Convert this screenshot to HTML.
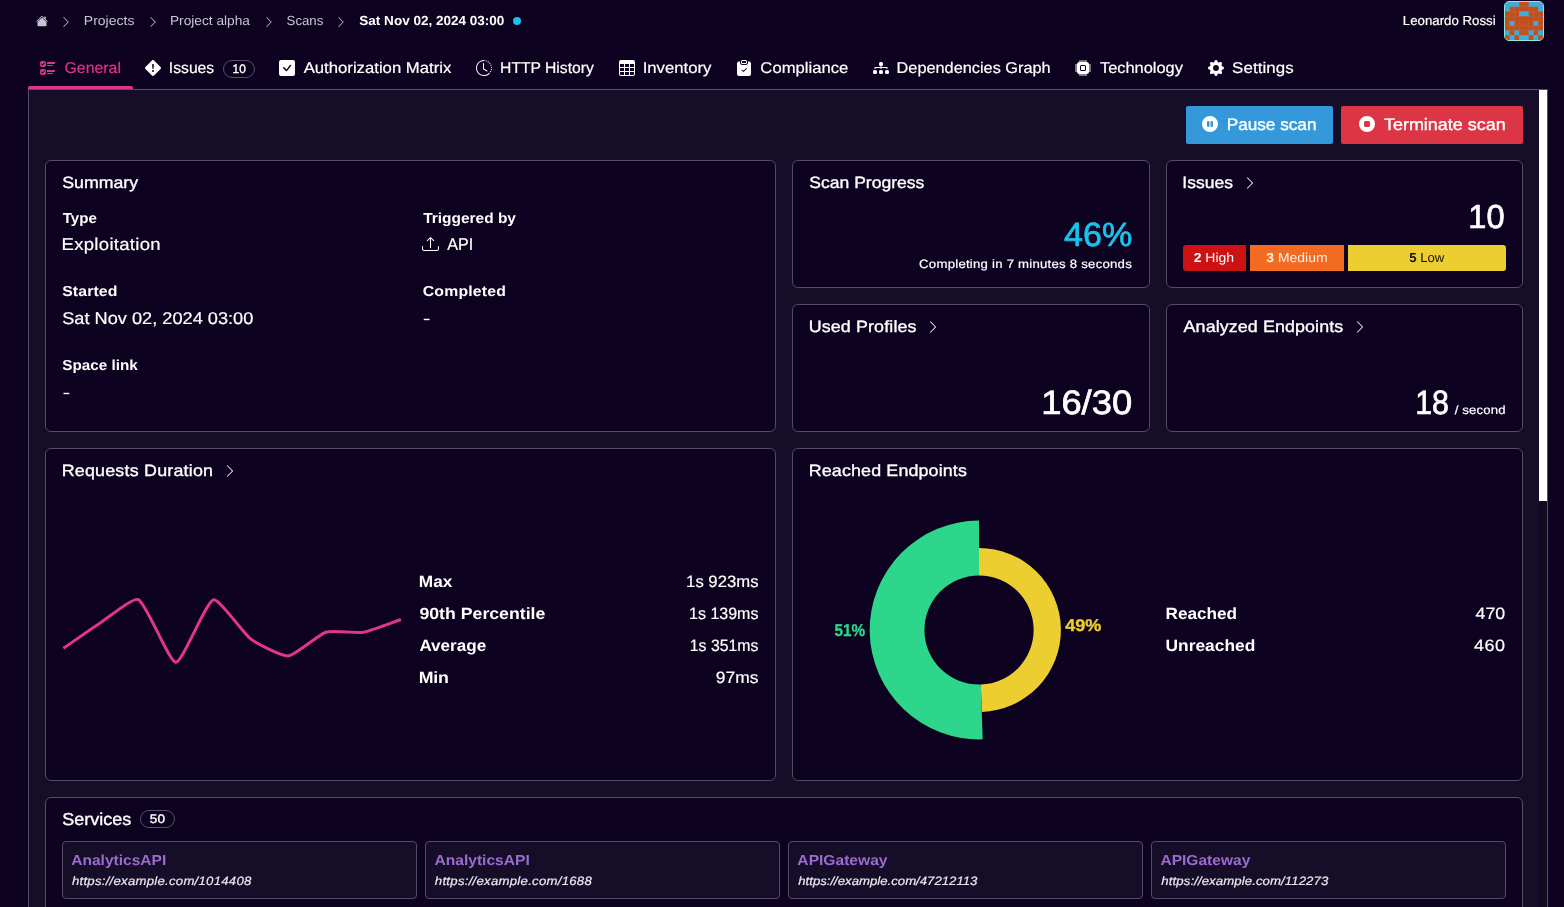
<!DOCTYPE html>
<html lang="en">
<head>
<meta charset="utf-8">
<title>Scan Sat Nov 02, 2024 03:00 - General</title>
<style>
html,body{margin:0;padding:0}
body{width:1564px;height:907px;overflow:hidden;background:#0d0220;color:#fff;font-family:"Liberation Sans",sans-serif}
#app{position:absolute;left:0;top:0;width:1564px;height:907px;overflow:hidden;will-change:transform}
#app *{box-sizing:border-box}
.g{position:absolute}
.t{position:absolute;margin:0;padding:0;white-space:nowrap;line-height:1;text-rendering:geometricPrecision;text-decoration:none}
.ic{position:absolute;display:block;overflow:visible}
.panel{background:#160e28;border:1px solid #565063}
.card{background:#0d0220;border:1px solid #544c64;border-radius:6px}
.svc{background:#160e28;border:1px solid #544c64;border-radius:4px}
.pill{border:1px solid #585068;border-radius:10px}
.btn{border-radius:2px}
</style>
</head>
<body>
<div id="app">
 <header class="g top" style="left:0px;top:0px;width:1564px;height:44px;">
  <nav class="g crumbs" aria-label="breadcrumb" style="left:28px;top:8px;width:520px;height:28px;">
   <svg class="ic" style="left:8px;top:7.3px" width="12" height="12" viewBox="0 0 16 16" fill="#c9c4d1" aria-hidden="true"><path d="M8.707 1.5a1 1 0 0 0-1.414 0L.646 8.146a.5.5 0 0 0 .708.708L8 2.207l6.646 6.647a.5.5 0 0 0 .708-.708L13 5.793V2.5a.5.5 0 0 0-.5-.5h-1a.5.5 0 0 0-.5.5v1.293z"/><path d="m8 3.293 6 6V13.5a1.5 1.5 0 0 1-1.5 1.5h-9A1.5 1.5 0 0 1 2 13.5V9.293z"/></svg>
   <svg class="ic" style="left:31.85px;top:8px" width="12" height="12" viewBox="0 0 16 16" fill="#c9c4d1" aria-hidden="true"><path fill-rule="evenodd" d="M4.646 1.646a.5.5 0 0 1 .708 0l6 6a.5.5 0 0 1 0 .708l-6 6a.5.5 0 0 1-.708-.708L10.293 8 4.646 2.354a.5.5 0 0 1 0-.708"/></svg>
   <svg class="ic" style="left:118.6px;top:8px" width="12" height="12" viewBox="0 0 16 16" fill="#c9c4d1" aria-hidden="true"><path fill-rule="evenodd" d="M4.646 1.646a.5.5 0 0 1 .708 0l6 6a.5.5 0 0 1 0 .708l-6 6a.5.5 0 0 1-.708-.708L10.293 8 4.646 2.354a.5.5 0 0 1 0-.708"/></svg>
   <svg class="ic" style="left:234.75px;top:8px" width="12" height="12" viewBox="0 0 16 16" fill="#c9c4d1" aria-hidden="true"><path fill-rule="evenodd" d="M4.646 1.646a.5.5 0 0 1 .708 0l6 6a.5.5 0 0 1 0 .708l-6 6a.5.5 0 0 1-.708-.708L10.293 8 4.646 2.354a.5.5 0 0 1 0-.708"/></svg>
   <svg class="ic" style="left:307.15px;top:8px" width="12" height="12" viewBox="0 0 16 16" fill="#c9c4d1" aria-hidden="true"><path fill-rule="evenodd" d="M4.646 1.646a.5.5 0 0 1 .708 0l6 6a.5.5 0 0 1 0 .708l-6 6a.5.5 0 0 1-.708-.708L10.293 8 4.646 2.354a.5.5 0 0 1 0-.708"/></svg>
   <i class="g" style="left:484.9px;top:8.8px;width:8.4px;height:8.4px;border-radius:50%;background:#16c1ea"></i>
   <span class="t" style="left:55px;top:6px;color:#c9c4d1;font-size:13.2px;font-weight:400;letter-spacing:0.000px;transform:translateX(0.82px) scaleX(1.0614);transform-origin:0 0;">Projects</span>
   <span class="t" style="left:141px;top:6px;color:#c9c4d1;font-size:13.2px;font-weight:400;letter-spacing:0.000px;transform:translateX(0.92px) scaleX(1.0397);transform-origin:0 0;">Project alpha</span>
   <span class="t" style="left:258px;top:6px;color:#c9c4d1;font-size:13.2px;font-weight:400;letter-spacing:0.000px;transform:translateX(0.60px) scaleX(1.0014);transform-origin:0 0;">Scans</span>
   <span class="t" style="left:331px;top:6px;color:#ffffff;font-size:13.2px;font-weight:700;letter-spacing:0.000px;transform:translateX(0.32px) scaleX(1.0251);transform-origin:0 0;">Sat Nov 02, 2024 03:00</span>
  </nav>
  <div class="g user" style="left:1390px;top:0px;width:160px;height:44px;">
   <span class="t" style="left:12px;top:14px;color:#ffffff;font-size:13.1px;font-weight:400;letter-spacing:0.000px;-webkit-text-stroke:0.2px currentColor;transform:translateX(0.78px) scaleX(1.0121);transform-origin:0 0;">Leonardo Rossi</span>
   <div class="g avatar" style="left:114px;top:1px;width:40px;height:40px;border:1px solid #8fe8d8;border-radius:5px;overflow:hidden;background:#9a8a86;">
    <svg width="38" height="38" viewBox="0 0 38 38" style="display:block" role="img" aria-label="Leonardo Rossi avatar"><rect x="0.000" y="0.000" width="4.750" height="4.750" fill="#3baee0"/><rect x="4.750" y="0.000" width="4.750" height="4.750" fill="#3baee0"/><rect x="9.500" y="0.000" width="4.750" height="4.750" fill="#3baee0"/><rect x="14.250" y="0.000" width="4.750" height="4.750" fill="#c2501f"/><rect x="19.000" y="0.000" width="4.750" height="4.750" fill="#c2501f"/><rect x="23.750" y="0.000" width="4.750" height="4.750" fill="#3baee0"/><rect x="28.500" y="0.000" width="4.750" height="4.750" fill="#3baee0"/><rect x="33.250" y="0.000" width="4.750" height="4.750" fill="#3baee0"/><rect x="0.000" y="4.750" width="4.750" height="4.750" fill="#3baee0"/><rect x="4.750" y="4.750" width="4.750" height="4.750" fill="#c2501f"/><rect x="9.500" y="4.750" width="4.750" height="4.750" fill="#c2501f"/><rect x="14.250" y="4.750" width="4.750" height="4.750" fill="#c2501f"/><rect x="19.000" y="4.750" width="4.750" height="4.750" fill="#c2501f"/><rect x="23.750" y="4.750" width="4.750" height="4.750" fill="#c2501f"/><rect x="28.500" y="4.750" width="4.750" height="4.750" fill="#c2501f"/><rect x="33.250" y="4.750" width="4.750" height="4.750" fill="#3baee0"/><rect x="0.000" y="9.500" width="4.750" height="4.750" fill="#c2501f"/><rect x="4.750" y="9.500" width="4.750" height="4.750" fill="#c2501f"/><rect x="9.500" y="9.500" width="4.750" height="4.750" fill="#c2501f"/><rect x="14.250" y="9.500" width="4.750" height="4.750" fill="#3baee0"/><rect x="19.000" y="9.500" width="4.750" height="4.750" fill="#3baee0"/><rect x="23.750" y="9.500" width="4.750" height="4.750" fill="#c2501f"/><rect x="28.500" y="9.500" width="4.750" height="4.750" fill="#c2501f"/><rect x="33.250" y="9.500" width="4.750" height="4.750" fill="#c2501f"/><rect x="0.000" y="14.250" width="4.750" height="4.750" fill="#c2501f"/><rect x="4.750" y="14.250" width="4.750" height="4.750" fill="#c2501f"/><rect x="9.500" y="14.250" width="4.750" height="4.750" fill="#c2501f"/><rect x="14.250" y="14.250" width="4.750" height="4.750" fill="#c2501f"/><rect x="19.000" y="14.250" width="4.750" height="4.750" fill="#c2501f"/><rect x="23.750" y="14.250" width="4.750" height="4.750" fill="#c2501f"/><rect x="28.500" y="14.250" width="4.750" height="4.750" fill="#c2501f"/><rect x="33.250" y="14.250" width="4.750" height="4.750" fill="#c2501f"/><rect x="0.000" y="19.000" width="4.750" height="4.750" fill="#c2501f"/><rect x="4.750" y="19.000" width="4.750" height="4.750" fill="#3baee0"/><rect x="9.500" y="19.000" width="4.750" height="4.750" fill="#c2501f"/><rect x="14.250" y="19.000" width="4.750" height="4.750" fill="#c2501f"/><rect x="19.000" y="19.000" width="4.750" height="4.750" fill="#c2501f"/><rect x="23.750" y="19.000" width="4.750" height="4.750" fill="#c2501f"/><rect x="28.500" y="19.000" width="4.750" height="4.750" fill="#3baee0"/><rect x="33.250" y="19.000" width="4.750" height="4.750" fill="#c2501f"/><rect x="0.000" y="23.750" width="4.750" height="4.750" fill="#c2501f"/><rect x="4.750" y="23.750" width="4.750" height="4.750" fill="#c2501f"/><rect x="9.500" y="23.750" width="4.750" height="4.750" fill="#c2501f"/><rect x="14.250" y="23.750" width="4.750" height="4.750" fill="#c2501f"/><rect x="19.000" y="23.750" width="4.750" height="4.750" fill="#c2501f"/><rect x="23.750" y="23.750" width="4.750" height="4.750" fill="#c2501f"/><rect x="28.500" y="23.750" width="4.750" height="4.750" fill="#c2501f"/><rect x="33.250" y="23.750" width="4.750" height="4.750" fill="#c2501f"/><rect x="0.000" y="28.500" width="4.750" height="4.750" fill="#3baee0"/><rect x="4.750" y="28.500" width="4.750" height="4.750" fill="#c2501f"/><rect x="9.500" y="28.500" width="4.750" height="4.750" fill="#3baee0"/><rect x="14.250" y="28.500" width="4.750" height="4.750" fill="#c2501f"/><rect x="19.000" y="28.500" width="4.750" height="4.750" fill="#c2501f"/><rect x="23.750" y="28.500" width="4.750" height="4.750" fill="#3baee0"/><rect x="28.500" y="28.500" width="4.750" height="4.750" fill="#c2501f"/><rect x="33.250" y="28.500" width="4.750" height="4.750" fill="#3baee0"/><rect x="0.000" y="33.250" width="4.750" height="4.750" fill="#c2501f"/><rect x="4.750" y="33.250" width="4.750" height="4.750" fill="#3baee0"/><rect x="9.500" y="33.250" width="4.750" height="4.750" fill="#c2501f"/><rect x="14.250" y="33.250" width="4.750" height="4.750" fill="#3baee0"/><rect x="19.000" y="33.250" width="4.750" height="4.750" fill="#3baee0"/><rect x="23.750" y="33.250" width="4.750" height="4.750" fill="#c2501f"/><rect x="28.500" y="33.250" width="4.750" height="4.750" fill="#3baee0"/><rect x="33.250" y="33.250" width="4.750" height="4.750" fill="#c2501f"/></svg>
   </div>
  </div>
 </header>
 <nav class="g tabs" aria-label="Scan sections" style="left:28px;top:48px;width:1400px;height:41px;">
  <a class="g tab active" style="left:0px;top:4px;width:105px;height:37px;">
   <i class="g" style="left:0;top:34px;width:105px;height:3px;background:#dc348a;border-radius:2px 2px 0 0"></i>
   <svg class="ic" style="left:12px;top:8.2px" width="16" height="16" viewBox="0 0 16 16" fill="#dc348a" aria-hidden="true"><path d="M7 2.5a.5.5 0 0 1 .5-.5h7a.5.5 0 0 1 .5.5v1a.5.5 0 0 1-.5.5h-7a.5.5 0 0 1-.5-.5zM2 1a2 2 0 0 0-2 2v2a2 2 0 0 0 2 2h2a2 2 0 0 0 2-2V3a2 2 0 0 0-2-2zm0 8a2 2 0 0 0-2 2v2a2 2 0 0 0 2 2h2a2 2 0 0 0 2-2v-2a2 2 0 0 0-2-2zm.854-3.646a.5.5 0 0 1-.708 0l-1-1a.5.5 0 1 1 .708-.708l.646.647 1.646-1.647a.5.5 0 1 1 .708.708zm0 8a.5.5 0 0 1-.708 0l-1-1a.5.5 0 0 1 .708-.708l.646.647 1.646-1.647a.5.5 0 0 1 .708.708zM7 10.5a.5.5 0 0 1 .5-.5h7a.5.5 0 0 1 .5.5v1a.5.5 0 0 1-.5.5h-7a.5.5 0 0 1-.5-.5zm0-5a.5.5 0 0 1 .5-.5h5a.5.5 0 0 1 0 1h-5a.5.5 0 0 1-.5-.5m0 8a.5.5 0 0 1 .5-.5h5a.5.5 0 0 1 0 1h-5a.5.5 0 0 1-.5-.5"/></svg>
   <span class="t" style="left:36px;top:9px;color:#dc348a;font-size:15.5px;font-weight:400;letter-spacing:0.000px;-webkit-text-stroke:0.2px currentColor;transform:translateX(0.48px) scaleX(1.0242);transform-origin:0 0;">General</span>
  </a>
  <a class="g tab" style="left:109px;top:4px;width:126px;height:37px;">
   <svg class="ic" style="left:8.1px;top:8px" width="16" height="16" viewBox="0 0 16 16" fill="#fff" aria-hidden="true"><path d="M9.05.435c-.58-.58-1.52-.58-2.1 0L.436 6.95c-.58.58-.58 1.519 0 2.098l6.516 6.516c.58.58 1.519.58 2.098 0l6.516-6.516c.58-.58.58-1.519 0-2.098zM8 4c.535 0 .954.462.9.995l-.35 3.507a.552.552 0 0 1-1.1 0L7.1 4.995A.905.905 0 0 1 8 4m.002 6a1 1 0 1 1 0 2 1 1 0 0 1 0-2"/></svg>
   <span class="t" style="left:31px;top:9px;color:#ffffff;font-size:15.5px;font-weight:400;letter-spacing:0.000px;-webkit-text-stroke:0.2px currentColor;transform:translateX(0.81px) scaleX(1.0134);transform-origin:0 0;">Issues</span>
   <span class="g pill" style="left:86px;top:8px;width:32px;height:18px;">
    <span class="t" style="left:8px;top:2px;color:#ffffff;font-size:12.4px;font-weight:400;letter-spacing:0.000px;-webkit-text-stroke:0.35px currentColor;transform:translateX(0.54px) scaleX(0.9569);transform-origin:0 0;">10</span>
   </span>
  </a>
  <a class="g tab" style="left:243px;top:4px;width:189px;height:37px;">
   <svg class="ic" style="left:7.9px;top:8px" width="16" height="16" viewBox="0 0 16 16" fill="#fff" aria-hidden="true"><path d="M2 0a2 2 0 0 0-2 2v12a2 2 0 0 0 2 2h12a2 2 0 0 0 2-2V2a2 2 0 0 0-2-2zm10.03 4.97a.75.75 0 0 1 .011 1.05l-3.992 4.99a.75.75 0 0 1-1.08.02L4.324 8.384a.75.75 0 1 1 1.06-1.06l2.094 2.093 3.473-4.425a.75.75 0 0 1 1.08-.022z"/></svg>
   <span class="t" style="left:32px;top:9px;color:#ffffff;font-size:15.5px;font-weight:400;letter-spacing:0.000px;-webkit-text-stroke:0.2px currentColor;transform:translateX(0.63px) scaleX(1.0784);transform-origin:0 0;">Authorization Matrix</span>
  </a>
  <a class="g tab" style="left:440px;top:4px;width:135px;height:37px;">
   <svg class="ic" style="left:7.9px;top:8px" width="16" height="16" viewBox="0 0 16 16" fill="#fff" aria-hidden="true"><path d="M8.515 1.019A7 7 0 0 0 8 1V0a8 8 0 0 1 .589.022zm2.004.45a7 7 0 0 0-.985-.299l.219-.976q.576.129 1.126.342zm1.37.71a7 7 0 0 0-.439-.27l.493-.87a8 8 0 0 1 .979.654l-.615.789a7 7 0 0 0-.418-.302zm1.834 1.79a7 7 0 0 0-.653-.796l.724-.69q.406.429.747.91zm.744 1.352a7 7 0 0 0-.214-.468l.893-.45a8 8 0 0 1 .45 1.088l-.95.313a7 7 0 0 0-.179-.483m.53 2.507a7 7 0 0 0-.1-1.025l.985-.17q.1.58.116 1.17zm-.131 1.538q.05-.254.081-.51l.993.123a8 8 0 0 1-.23 1.155l-.964-.267q.069-.247.12-.501m-.952 2.379q.276-.436.486-.908l.914.405q-.24.54-.555 1.038zm-.964 1.205q.183-.183.35-.378l.758.653a8 8 0 0 1-.401.432z"/><path d="M8 1a7 7 0 1 0 4.95 11.95l.707.707A8.001 8.001 0 1 1 8 0z"/><path d="M7.5 3a.5.5 0 0 1 .5.5v5.21l3.248 1.856a.5.5 0 0 1-.496.868l-3.5-2A.5.5 0 0 1 7 9V3.500a.5.5 0 0 1 .5-.5"/></svg>
   <span class="t" style="left:32px;top:9px;color:#ffffff;font-size:15.5px;font-weight:400;letter-spacing:0.000px;-webkit-text-stroke:0.2px currentColor;transform:translateX(0.07px) scaleX(1.0107);transform-origin:0 0;">HTTP History</span>
  </a>
  <a class="g tab" style="left:583px;top:4px;width:109px;height:37px;">
   <svg class="ic" style="left:7.8px;top:8px" width="16" height="16" viewBox="0 0 16 16" fill="#fff" aria-hidden="true"><path d="M0 2a2 2 0 0 1 2-2h12a2 2 0 0 1 2 2v12a2 2 0 0 1-2 2H2a2 2 0 0 1-2-2zm15 2h-4v3h4zm0 4h-4v3h4zm0 4h-4v3h3a1 1 0 0 0 1-1zm-5 3v-3H6v3zm-5 0v-3H1v2a1 1 0 0 0 1 1zm-4-4h4V8H1zm0-4h4V4H1zm5-3v3h4V4zm4 4H6v3h4z"/></svg>
   <span class="t" style="left:31px;top:9px;color:#ffffff;font-size:15.5px;font-weight:400;letter-spacing:-0.000px;-webkit-text-stroke:0.2px currentColor;transform:translateX(0.63px) scaleX(1.0785);transform-origin:0 0;">Inventory</span>
  </a>
  <a class="g tab" style="left:700px;top:4px;width:129px;height:37px;">
   <svg class="ic" style="left:7.9px;top:7.8px" width="16" height="16" viewBox="0 0 16 16" fill="#fff" aria-hidden="true"><path d="M6.5 0A1.5 1.5 0 0 0 5 1.5v1A1.5 1.5 0 0 0 6.5 4h3A1.5 1.5 0 0 0 11 2.5v-1A1.5 1.5 0 0 0 9.5 0zm3 1a.5.5 0 0 1 .5.5v1a.5.5 0 0 1-.5.5h-3a.5.5 0 0 1-.5-.5v-1a.5.5 0 0 1 .5-.5z"/><path d="M4 1.5H3a2 2 0 0 0-2 2V14a2 2 0 0 0 2 2h10a2 2 0 0 0 2-2V3.500a2 2 0 0 0-2-2h-1v1A2.500 2.500 0 0 1 9.500 5h-3A2.500 2.500 0 0 1 4 2.500zm6.854 7.354-3 3a.5.5 0 0 1-.708 0l-1.500-1.500a.5.5 0 0 1 .708-.708L7.500 10.793l2.646-2.647a.5.5 0 0 1 .708.708"/></svg>
   <span class="t" style="left:32px;top:9px;color:#ffffff;font-size:15.5px;font-weight:400;letter-spacing:0.000px;-webkit-text-stroke:0.2px currentColor;transform:translateX(0.36px) scaleX(1.0736);transform-origin:0 0;">Compliance</span>
  </a>
  <a class="g tab" style="left:837px;top:4px;width:194px;height:37px;">
   <svg class="ic" style="left:7.5px;top:8px" width="16" height="16" viewBox="0 0 16 16" fill="#fff" aria-hidden="true"><path fill-rule="evenodd" d="M6 3.5A1.5 1.5 0 0 1 7.5 2h1A1.5 1.5 0 0 1 10 3.5v1A1.5 1.5 0 0 1 8.500 6v1H14a.5.5 0 0 1 .5.5v1a.5.5 0 0 1-1 0V8h-5v.5a.5.5 0 0 1-1 0V8h-5v.5a.5.5 0 0 1-1 0v-1A.5.5 0 0 1 2 7h5.500V6A1.500 1.500 0 0 1 6 4.500zm-6 8A1.500 1.500 0 0 1 1.500 10h1A1.500 1.500 0 0 1 4 11.500v1A1.500 1.500 0 0 1 2.500 14h-1A1.500 1.500 0 0 1 0 12.500zm6 0A1.500 1.500 0 0 1 7.500 10h1a1.500 1.500 0 0 1 1.500 1.500v1A1.500 1.500 0 0 1 8.500 14h-1A1.500 1.500 0 0 1 6 12.500zm6 0a1.500 1.500 0 0 1 1.500-1.500h1a1.500 1.500 0 0 1 1.500 1.500v1a1.500 1.500 0 0 1-1.500 1.500h-1a1.500 1.500 0 0 1-1.500-1.500z"/></svg>
   <span class="t" style="left:31px;top:9px;color:#ffffff;font-size:15.5px;font-weight:400;letter-spacing:0.000px;-webkit-text-stroke:0.2px currentColor;transform:translateX(0.55px) scaleX(1.0518);transform-origin:0 0;">Dependencies Graph</span>
  </a>
  <a class="g tab" style="left:1039px;top:4px;width:125px;height:37px;">
   <svg class="ic" style="left:8px;top:8px" width="16" height="16" viewBox="0 0 16 16" fill="#fff" aria-hidden="true"><path d="M6.5 6a.5.5 0 0 0-.5.5v3a.5.5 0 0 0 .5.5h3a.5.5 0 0 0 .5-.5v-3a.5.5 0 0 0-.5-.5z"/><path d="M5.500.5a.5.5 0 0 0-1 0V2A2.500 2.500 0 0 0 2 4.500H.5a.5.5 0 0 0 0 1H2v1H.5a.5.5 0 0 0 0 1H2v1H.5a.5.5 0 0 0 0 1H2v1H.5a.5.5 0 0 0 0 1H2A2.500 2.500 0 0 0 4.500 14v1.500a.5.5 0 0 0 1 0V14h1v1.500a.5.5 0 0 0 1 0V14h1v1.500a.5.5 0 0 0 1 0V14h1v1.500a.5.5 0 0 0 1 0V14a2.500 2.500 0 0 0 2.500-2.500h1.500a.5.5 0 0 0 0-1H14v-1h1.500a.5.5 0 0 0 0-1H14v-1h1.500a.5.5 0 0 0 0-1H14v-1h1.500a.5.5 0 0 0 0-1H14A2.500 2.500 0 0 0 11.500 2V.5a.5.5 0 0 0-1 0V2h-1V.5a.5.5 0 0 0-1 0V2h-1V.5a.5.5 0 0 0-1 0V2h-1zm1 4.500h3A1.500 1.500 0 0 1 11 6.500v3A1.500 1.500 0 0 1 9.500 11h-3A1.500 1.500 0 0 1 5 9.500v-3A1.500 1.500 0 0 1 6.500 5"/></svg>
   <span class="t" style="left:32px;top:9px;color:#ffffff;font-size:15.5px;font-weight:400;letter-spacing:0.000px;-webkit-text-stroke:0.2px currentColor;transform:translateX(0.94px) scaleX(1.0575);transform-origin:0 0;">Technology</span>
  </a>
  <a class="g tab" style="left:1172px;top:4px;width:102px;height:37px;">
   <svg class="ic" style="left:7.7px;top:8px" width="16" height="16" viewBox="0 0 16 16" fill="#fff" aria-hidden="true"><path d="M9.405 1.05c-.413-1.4-2.397-1.4-2.81 0l-.1.34a1.464 1.464 0 0 1-2.105.872l-.31-.17c-1.283-.698-2.686.705-1.987 1.987l.169.311c.446.82.023 1.841-.872 2.105l-.34.1c-1.4.413-1.400 2.397 0 2.810l.340.100a1.464 1.464 0 0 1 .872 2.105l-.170.310c-.698 1.283.705 2.686 1.987 1.987l.311-.169a1.464 1.464 0 0 1 2.105.872l.100.340c.413 1.400 2.397 1.400 2.810 0l.100-.340a1.464 1.464 0 0 1 2.105-.872l.310.170c1.283.698 2.686-.705 1.987-1.987l-.169-.311a1.464 1.464 0 0 1 .872-2.105l.340-.100c1.400-.413 1.400-2.397 0-2.810l-.340-.100a1.464 1.464 0 0 1-.872-2.105l.170-.310c.698-1.283-.705-2.686-1.987-1.987l-.311.169a1.464 1.464 0 0 1-2.105-.872zM8 10.930a2.929 2.929 0 1 1 0-5.860 2.929 2.929 0 0 1 0 5.858z"/></svg>
   <span class="t" style="left:32px;top:9px;color:#ffffff;font-size:15.5px;font-weight:400;letter-spacing:0.087px;-webkit-text-stroke:0.2px currentColor;transform:translateX(0.08px) scaleX(1.0900);transform-origin:0 0;">Settings</span>
  </a>
 </nav>
 <main class="g panel" style="left:28px;top:89px;width:1520px;height:830px;">
  <div class="g actions" style="left:1151px;top:10px;width:350px;height:50px;">
   <a class="g btn pause" role="button" style="left:6px;top:6px;width:147px;height:38px;background:#3498db;">
    <svg class="ic" style="left:16.4px;top:10px" width="16" height="16" viewBox="0 0 16 16" fill="#fff" aria-hidden="true"><path d="M16 8A8 8 0 1 1 0 8a8 8 0 0 1 16 0M6.250 5C5.560 5 5 5.560 5 6.250v3.500a1.250 1.250 0 1 0 2.500 0v-3.500C7.500 5.560 6.940 5 6.250 5m3.500 0c-.690 0-1.250.560-1.250 1.250v3.500a1.250 1.250 0 1 0 2.500 0v-3.500C11 5.560 10.440 5 9.750 5"/></svg>
    <span class="t" style="left:40px;top:11px;color:#ffffff;font-size:16.6px;font-weight:400;letter-spacing:0.000px;-webkit-text-stroke:0.35px currentColor;transform:translateX(0.68px) scaleX(1.0357);transform-origin:0 0;">Pause scan</span>
   </a>
   <a class="g btn terminate" role="button" style="left:161px;top:6px;width:182px;height:38px;background:#dc3545;">
    <svg class="ic" style="left:17.5px;top:10px" width="16" height="16" viewBox="0 0 16 16" fill="#fff" aria-hidden="true"><path d="M16 8A8 8 0 1 1 0 8a8 8 0 0 1 16 0M6.500 5A1.500 1.500 0 0 0 5 6.500v3A1.500 1.500 0 0 0 6.500 11h3A1.500 1.500 0 0 0 11 9.500v-3A1.500 1.500 0 0 0 9.500 5z"/></svg>
    <span class="t" style="left:42px;top:11px;color:#ffffff;font-size:16.6px;font-weight:400;letter-spacing:0.000px;-webkit-text-stroke:0.35px currentColor;transform:translateX(0.91px) scaleX(1.0834);transform-origin:0 0;">Terminate scan</span>
   </a>
  </div>
  <section class="g card summary" style="left:16px;top:70px;width:731px;height:272px;">
   <svg class="ic" style="left:376px;top:74.85px" width="17" height="16.2" viewBox="0 0 16 16" preserveAspectRatio="none" fill="#fff" aria-hidden="true"><path d="M.5 9.900a.5.5 0 0 1 .5.5v2.500a1 1 0 0 0 1 1h12a1 1 0 0 0 1-1v-2.500a.5.5 0 0 1 1 0v2.500a2 2 0 0 1-2 2H2a2 2 0 0 1-2-2v-2.500a.5.5 0 0 1 .5-.5"/><path d="M7.646 1.146a.5.5 0 0 1 .708 0l3 3a.5.5 0 0 1-.708.708L8.500 2.707V11.500a.5.5 0 0 1-1 0V2.707L5.354 4.854a.5.5 0 1 1-.708-.708z"/></svg>
   <h2 class="t" style="left:16px;top:14px;color:#ffffff;font-size:16.4px;font-weight:400;letter-spacing:0.000px;-webkit-text-stroke:0.35px currentColor;transform:translateX(0.28px) scaleX(1.0809);transform-origin:0 0;">Summary</h2>
   <b class="t" style="left:16px;top:51px;color:#ffffff;font-size:14.5px;font-weight:700;letter-spacing:0.000px;transform:translateX(0.70px) scaleX(1.0412);transform-origin:0 0;">Type</b>
   <b class="t" style="left:377px;top:51px;color:#ffffff;font-size:14.5px;font-weight:700;letter-spacing:0.000px;transform:translateX(0.20px) scaleX(1.0654);transform-origin:0 0;">Triggered by</b>
   <b class="t" style="left:16px;top:124px;color:#ffffff;font-size:14.5px;font-weight:700;letter-spacing:0.102px;transform:translateX(0.21px) scaleX(1.0900);transform-origin:0 0;">Started</b>
   <b class="t" style="left:376px;top:124px;color:#ffffff;font-size:14.5px;font-weight:700;letter-spacing:0.172px;transform:translateX(0.77px) scaleX(1.0900);transform-origin:0 0;">Completed</b>
   <b class="t" style="left:16px;top:198px;color:#ffffff;font-size:14.5px;font-weight:700;letter-spacing:0.000px;transform:translateX(0.23px) scaleX(1.0519);transform-origin:0 0;">Space link</b>
   <span class="t" style="left:15px;top:75px;color:#ffffff;font-size:17px;font-weight:400;letter-spacing:0.277px;-webkit-text-stroke:0.2px currentColor;transform:translateX(0.53px) scaleX(1.0900);transform-origin:0 0;">Exploitation</span>
   <span class="t" style="left:401px;top:75px;color:#ffffff;font-size:17px;font-weight:400;letter-spacing:0.000px;-webkit-text-stroke:0.2px currentColor;transform:translateX(0.15px) scaleX(0.9512);transform-origin:0 0;">API</span>
   <span class="t" style="left:16px;top:149px;color:#ffffff;font-size:17px;font-weight:400;letter-spacing:0.000px;-webkit-text-stroke:0.2px currentColor;transform:translateX(0.23px) scaleX(1.0696);transform-origin:0 0;">Sat Nov 02, 2024 03:00</span>
   <span class="t" style="left:376px;top:149px;color:#ffffff;font-size:17px;font-weight:400;letter-spacing:0.000px;transform:translateX(0.68px) scaleX(1.3731);transform-origin:0 0;">-</span>
   <span class="t" style="left:16px;top:223px;color:#ffffff;font-size:17px;font-weight:400;letter-spacing:0.000px;transform:translateX(0.38px) scaleX(1.3731);transform-origin:0 0;">-</span>
  </section>
  <section class="g card progress" style="left:763px;top:70px;width:358px;height:128px;">
   <h2 class="t" style="left:16px;top:14px;color:#ffffff;font-size:16.4px;font-weight:400;letter-spacing:0.000px;-webkit-text-stroke:0.35px currentColor;transform:translateX(0.28px) scaleX(1.0708);transform-origin:0 0;">Scan Progress</h2>
   <span class="t" style="left:270px;top:58px;color:#17c4ee;font-size:33.5px;font-weight:400;letter-spacing:0.000px;-webkit-text-stroke:0.7px currentColor;transform:translateX(0.95px) scaleX(1.0180);transform-origin:0 0;">46%</span>
   <span class="t" style="left:126px;top:97px;color:#ffffff;font-size:12.1px;font-weight:400;letter-spacing:0.214px;-webkit-text-stroke:0.2px currentColor;transform:translateX(0.12px) scaleX(1.0900);transform-origin:0 0;">Completing in 7 minutes 8 seconds</span>
  </section>
  <section class="g card issues" style="left:1137px;top:70px;width:357px;height:128px;">
   <svg class="ic" style="left:75.75px;top:14.7px" width="14" height="14" viewBox="0 0 16 16" fill="#fff" aria-hidden="true"><path fill-rule="evenodd" d="M4.646 1.646a.5.5 0 0 1 .708 0l6 6a.5.5 0 0 1 0 .708l-6 6a.5.5 0 0 1-.708-.708L10.293 8 4.646 2.354a.5.5 0 0 1 0-.708"/></svg>
   <h2 class="t" style="left:15px;top:14px;color:#ffffff;font-size:16.4px;font-weight:400;letter-spacing:0.000px;-webkit-text-stroke:0.35px currentColor;transform:translateX(0.34px) scaleX(1.0693);transform-origin:0 0;">Issues</h2>
   <span class="t" style="left:301px;top:40px;color:#ffffff;font-size:33.3px;font-weight:400;letter-spacing:0.000px;-webkit-text-stroke:0.7px currentColor;transform:translateX(0.34px) scaleX(0.9781);transform-origin:0 0;">10</span>
   <div class="g bar" style="left:16px;top:84px;width:63px;height:26px;background:#cc1212;border-radius:3px 0 0 3px;">
    <span class="t" style="left:10px;top:6px;color:#ffffff;font-size:13px;font-weight:400;letter-spacing:0.000px;transform:translateX(0.65px) scaleX(1.0747);transform-origin:0 0;"><b>2</b> High</span>
   </div>
   <div class="g bar" style="left:83px;top:84px;width:94px;height:26px;background:#f26b21;border-radius:0;">
    <span class="t" style="left:16px;top:6px;color:#fff4e8;font-size:13px;font-weight:400;letter-spacing:0.000px;transform:translateX(0.37px) scaleX(1.0721);transform-origin:0 0;"><b>3</b> Medium</span>
   </div>
   <div class="g bar" style="left:181px;top:84px;width:158px;height:26px;background:#ecce30;border-radius:0 3px 3px 0;">
    <span class="t" style="left:61px;top:6px;color:#15120a;font-size:13px;font-weight:400;letter-spacing:0.000px;transform:translateX(0.27px) scaleX(1.0104);transform-origin:0 0;"><b>5</b> Low</span>
   </div>
  </section>
  <section class="g card profiles" style="left:763px;top:214px;width:358px;height:128px;">
   <svg class="ic" style="left:132.85px;top:14.8px" width="14" height="14" viewBox="0 0 16 16" fill="#fff" aria-hidden="true"><path fill-rule="evenodd" d="M4.646 1.646a.5.5 0 0 1 .708 0l6 6a.5.5 0 0 1 0 .708l-6 6a.5.5 0 0 1-.708-.708L10.293 8 4.646 2.354a.5.5 0 0 1 0-.708"/></svg>
   <h2 class="t" style="left:15px;top:14px;color:#ffffff;font-size:16.4px;font-weight:400;letter-spacing:0.119px;-webkit-text-stroke:0.35px currentColor;transform:translateX(0.68px) scaleX(1.0900);transform-origin:0 0;">Used Profiles</h2>
   <span class="t" style="left:248px;top:82px;color:#ffffff;font-size:33.8px;font-weight:400;letter-spacing:0.000px;-webkit-text-stroke:0.7px currentColor;transform:translateX(0.17px) scaleX(1.0757);transform-origin:0 0;">16/30</span>
  </section>
  <section class="g card analyzed" style="left:1137px;top:214px;width:357px;height:128px;">
   <svg class="ic" style="left:186.25px;top:14.8px" width="14" height="14" viewBox="0 0 16 16" fill="#fff" aria-hidden="true"><path fill-rule="evenodd" d="M4.646 1.646a.5.5 0 0 1 .708 0l6 6a.5.5 0 0 1 0 .708l-6 6a.5.5 0 0 1-.708-.708L10.293 8 4.646 2.354a.5.5 0 0 1 0-.708"/></svg>
   <h2 class="t" style="left:16px;top:14px;color:#ffffff;font-size:16.4px;font-weight:400;letter-spacing:0.090px;-webkit-text-stroke:0.35px currentColor;transform:translateX(0.58px) scaleX(1.0900);transform-origin:0 0;">Analyzed Endpoints</h2>
   <span class="t" style="left:248px;top:82px;color:#ffffff;font-size:33.8px;font-weight:400;letter-spacing:0.000px;-webkit-text-stroke:0.7px currentColor;transform:translateX(0.19px) scaleX(0.8981);transform-origin:0 0;">18</span>
   <span class="t" style="left:287px;top:99px;color:#ffffff;font-size:12.1px;font-weight:400;letter-spacing:0.158px;-webkit-text-stroke:0.2px currentColor;transform:translateX(0.64px) scaleX(1.0900);transform-origin:0 0;">/ second</span>
  </section>
  <section class="g card duration" style="left:16px;top:358px;width:731px;height:333px;">
   <svg class="ic" style="left:176.55px;top:14.9px" width="14" height="14" viewBox="0 0 16 16" fill="#fff" aria-hidden="true"><path fill-rule="evenodd" d="M4.646 1.646a.5.5 0 0 1 .708 0l6 6a.5.5 0 0 1 0 .708l-6 6a.5.5 0 0 1-.708-.708L10.293 8 4.646 2.354a.5.5 0 0 1 0-.708"/></svg>
   <svg class="ic" style="left:10px;top:120px" width="360" height="130" viewBox="0 0 360 130" fill="none" role="img" aria-label="Requests duration trend"><path d="M7.40 79.30C14.15 74.66 38.03 57.96 44.90 53.50C51.53 49.19 77.33 27.91 82.40 30.60C90.83 35.07 113.14 93.27 119.90 93.30C126.64 93.33 149.66 33.29 157.40 30.90C163.16 29.12 187.22 64.36 194.90 70.10C200.72 74.44 225.91 87.50 232.40 86.90C239.41 86.26 262.58 65.51 269.90 63.20C276.08 61.25 300.83 64.31 307.40 63.20C314.33 62.03 338.15 52.79 344.90 50.50" stroke="#e0358c" stroke-width="3" stroke-linejoin="round"/></svg>
   <h2 class="t" style="left:15px;top:14px;color:#ffffff;font-size:16.4px;font-weight:400;letter-spacing:0.195px;-webkit-text-stroke:0.35px currentColor;transform:translateX(0.66px) scaleX(1.0900);transform-origin:0 0;">Requests Duration</h2>
   <b class="t" style="left:372px;top:125px;color:#ffffff;font-size:16.3px;font-weight:700;letter-spacing:0.000px;transform:translateX(0.82px) scaleX(1.0587);transform-origin:0 0;">Max</b>
   <b class="t" style="left:373px;top:157px;color:#ffffff;font-size:16.3px;font-weight:700;letter-spacing:0.000px;transform:translateX(0.40px) scaleX(1.0874);transform-origin:0 0;">90th Percentile</b>
   <b class="t" style="left:373px;top:189px;color:#ffffff;font-size:16.3px;font-weight:700;letter-spacing:0.000px;transform:translateX(0.42px) scaleX(1.0487);transform-origin:0 0;">Average</b>
   <b class="t" style="left:372px;top:221px;color:#ffffff;font-size:16.3px;font-weight:700;letter-spacing:-0.186px;transform:translateX(0.78px) scaleX(1.0900);transform-origin:0 0;">Min</b>
   <span class="t" style="left:640px;top:125px;color:#ffffff;font-size:16.5px;font-weight:400;letter-spacing:0.000px;-webkit-text-stroke:0.2px currentColor;transform:translateX(0.09px) scaleX(1.0119);transform-origin:0 0;">1s 923ms</span>
   <span class="t" style="left:643px;top:157px;color:#ffffff;font-size:16.5px;font-weight:400;letter-spacing:0.000px;-webkit-text-stroke:0.2px currentColor;transform:translateX(0.12px) scaleX(0.9688);transform-origin:0 0;">1s 139ms</span>
   <span class="t" style="left:643px;top:189px;color:#ffffff;font-size:16.5px;font-weight:400;letter-spacing:0.000px;-webkit-text-stroke:0.2px currentColor;transform:translateX(0.82px) scaleX(0.9581);transform-origin:0 0;">1s 351ms</span>
   <span class="t" style="left:669px;top:221px;color:#ffffff;font-size:16.5px;font-weight:400;letter-spacing:0.000px;-webkit-text-stroke:0.2px currentColor;transform:translateX(0.87px) scaleX(1.0554);transform-origin:0 0;">97ms</span>
  </section>
  <section class="g card reached" style="left:763px;top:358px;width:731px;height:333px;">
   <svg class="ic" style="left:60px;top:60px" width="260" height="250" viewBox="0 0 260 250" role="img" aria-label="Reached endpoints chart"><path d="M126.00 39.00A82 82 0 0 1 128.77 202.95L127.84 175.57A54.6 54.6 0 0 0 126.00 66.40Z" fill="#ecce30"/><path d="M129.69 230.34A109.4 109.4 0 1 1 126.00 11.60L126.00 66.40A54.6 54.6 0 1 0 127.84 175.57Z" fill="#2dd68a"/></svg>
   <h2 class="t" style="left:15px;top:14px;color:#ffffff;font-size:16.4px;font-weight:400;letter-spacing:0.126px;-webkit-text-stroke:0.35px currentColor;transform:translateX(0.76px) scaleX(1.0900);transform-origin:0 0;">Reached Endpoints</h2>
   <b class="t" style="left:372px;top:157px;color:#ffffff;font-size:16.3px;font-weight:700;letter-spacing:0.000px;transform:translateX(0.52px) scaleX(1.0545);transform-origin:0 0;">Reached</b>
   <b class="t" style="left:372px;top:189px;color:#ffffff;font-size:16.3px;font-weight:700;letter-spacing:0.000px;transform:translateX(0.58px) scaleX(1.0653);transform-origin:0 0;">Unreached</b>
   <span class="t" style="left:682px;top:157px;color:#ffffff;font-size:16.5px;font-weight:400;letter-spacing:0.000px;-webkit-text-stroke:0.2px currentColor;transform:translateX(0.58px) scaleX(1.0772);transform-origin:0 0;">470</span>
   <span class="t" style="left:680px;top:189px;color:#ffffff;font-size:16.5px;font-weight:400;letter-spacing:0.551px;-webkit-text-stroke:0.2px currentColor;transform:translateX(0.88px) scaleX(1.0900);transform-origin:0 0;">460</span>
   <span class="t" style="left:41px;top:173px;color:#2dd68a;font-size:17px;font-weight:700;letter-spacing:0.000px;-webkit-text-stroke:0.35px currentColor;transform:translateX(0.43px) scaleX(0.8991);transform-origin:0 0;">51%</span>
   <span class="t" style="left:272px;top:168px;color:#ecce30;font-size:17px;font-weight:700;letter-spacing:0.000px;-webkit-text-stroke:0.35px currentColor;transform:translateX(0.23px) scaleX(1.0642);transform-origin:0 0;">49%</span>
  </section>
  <section class="g card services" style="left:16px;top:707px;width:1478px;height:130px;">
   <h2 class="t" style="left:16px;top:13px;color:#ffffff;font-size:17.3px;font-weight:400;letter-spacing:0.000px;-webkit-text-stroke:0.35px currentColor;transform:translateX(0.30px) scaleX(1.0406);transform-origin:0 0;">Services</h2>
   <span class="g pill" style="left:94px;top:12px;width:35px;height:18px;">
    <span class="t" style="left:8px;top:2px;color:#ffffff;font-size:12.4px;font-weight:400;letter-spacing:0.163px;-webkit-text-stroke:0.35px currentColor;transform:translateX(0.82px) scaleX(1.0900);transform-origin:0 0;">50</span>
   </span>
   <article class="g svc" style="left:16px;top:43px;width:355px;height:58px;">
    <a class="t" style="left:8px;top:12px;color:#9b6bd0;font-size:14.5px;font-weight:700;letter-spacing:0.000px;transform:translateX(0.17px) scaleX(1.0731);transform-origin:0 0;">AnalyticsAPI</a>
    <span class="t" style="left:8px;top:33px;color:#ebe7f0;font-size:12.1px;font-weight:400;letter-spacing:0.227px;font-style:italic;-webkit-text-stroke:0.2px currentColor;transform:translateX(0.95px) scaleX(1.0900);transform-origin:0 0;">https://example.com/1014408</span>
   </article>
   <article class="g svc" style="left:379px;top:43px;width:355px;height:58px;">
    <a class="t" style="left:8px;top:12px;color:#9b6bd0;font-size:14.5px;font-weight:700;letter-spacing:0.000px;transform:translateX(0.47px) scaleX(1.0751);transform-origin:0 0;">AnalyticsAPI</a>
    <span class="t" style="left:8px;top:33px;color:#ebe7f0;font-size:12.1px;font-weight:400;letter-spacing:0.238px;font-style:italic;-webkit-text-stroke:0.2px currentColor;transform:translateX(0.85px) scaleX(1.0900);transform-origin:0 0;">https://example.com/1688</span>
   </article>
   <article class="g svc" style="left:742px;top:43px;width:355px;height:58px;">
    <a class="t" style="left:8px;top:12px;color:#9b6bd0;font-size:14.5px;font-weight:700;letter-spacing:0.000px;transform:translateX(0.37px) scaleX(1.0756);transform-origin:0 0;">APIGateway</a>
    <span class="t" style="left:9px;top:33px;color:#ebe7f0;font-size:12.1px;font-weight:400;letter-spacing:-0.004px;font-style:italic;-webkit-text-stroke:0.2px currentColor;transform:translateX(0.25px) scaleX(1.0900);transform-origin:0 0;">https://example.com/47212113</span>
   </article>
   <article class="g svc" style="left:1105px;top:43px;width:355px;height:58px;">
    <a class="t" style="left:8px;top:12px;color:#9b6bd0;font-size:14.5px;font-weight:700;letter-spacing:0.000px;transform:translateX(0.47px) scaleX(1.0717);transform-origin:0 0;">APIGateway</a>
    <span class="t" style="left:9px;top:33px;color:#ebe7f0;font-size:12.1px;font-weight:400;letter-spacing:0.085px;font-style:italic;-webkit-text-stroke:0.2px currentColor;transform:translateX(0.35px) scaleX(1.0900);transform-origin:0 0;">https://example.com/112273</span>
   </article>
  </section>
  <div class="g scroll" style="left:1510px;top:0px;width:8px;height:817px;background:#110b1f;">
   <div class="g thumb" style="left:0px;top:0px;width:8px;height:411px;background:#fff;">
   </div>
  </div>
 </main>
</div>
</body>
</html>
